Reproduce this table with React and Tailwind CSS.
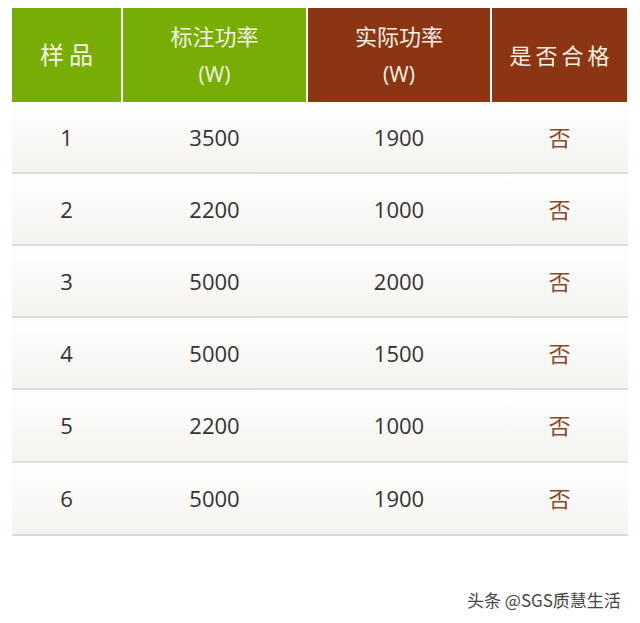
import React from "react";

const rows = [
  ["1", "3500", "1900", "否", "h-[72px]"],
  ["2", "2200", "1000", "否", "h-[72px]"],
  ["3", "5000", "2000", "否", "h-[72px]"],
  ["4", "5000", "1500", "否", "h-[72px]"],
  ["5", "2200", "1000", "否", "h-[73px]"],
  ["6", "5000", "1900", "否", "h-[73px]"],
];

const font = { fontFamily: '"Open Sans", "Noto Sans CJK SC", sans-serif' };

export default function App() {
  return (
    <div className="w-[640px] h-[623px] bg-white relative" style={font}>
      <div className="pt-[8px] pl-[12px] w-[628px]">
        <div className="flex gap-[2px] h-[94px] text-[#f6f1e4]">
          <div className="w-[109px] bg-[#77ae06] flex items-center justify-center text-[24px] tracking-[5px] pl-[5px]">
            样品
          </div>
          <div className="w-[183px] bg-[#77ae06] flex flex-col items-center justify-center text-[22px] leading-[38px]">
            <span>标注功率</span>
            <span className="text-[21px]">(W)</span>
          </div>
          <div className="w-[182px] bg-[#8b3512] flex flex-col items-center justify-center text-[22px] leading-[38px]">
            <span>实际功率</span>
            <span className="text-[21px]">(W)</span>
          </div>
          <div className="w-[135px] bg-[#8b3512] flex items-center justify-center text-[22px] tracking-[4px] pl-[4px]">
            是否合格
          </div>
        </div>
        {rows.map((r, i) => (
          <div
            key={i}
            className={`flex gap-[2px] ${r[4]} bg-gradient-to-b from-white to-[#f4f3ef] border-b-2 border-[#dddcd8] text-[22px] text-[#333333]`}
          >
            <div className="w-[109px] flex items-center justify-center">{r[0]}</div>
            <div className="w-[183px] flex items-center justify-center">{r[1]}</div>
            <div className="w-[182px] flex items-center justify-center">{r[2]}</div>
            <div className="w-[135px] flex items-center justify-center text-[#8b4a2a] text-[22px]">{r[3]}</div>
          </div>
        ))}
      </div>
      <div
        className="absolute left-[467px] top-[589px] text-[17px] leading-[22px] text-[#444444]"
        style={{ fontFamily: '"Noto Sans CJK SC", sans-serif', textShadow: "0 0 2px #fff, 0 0 1px #fff" }}
      >
        头条 @SGS质慧生活
      </div>
    </div>
  );
}
